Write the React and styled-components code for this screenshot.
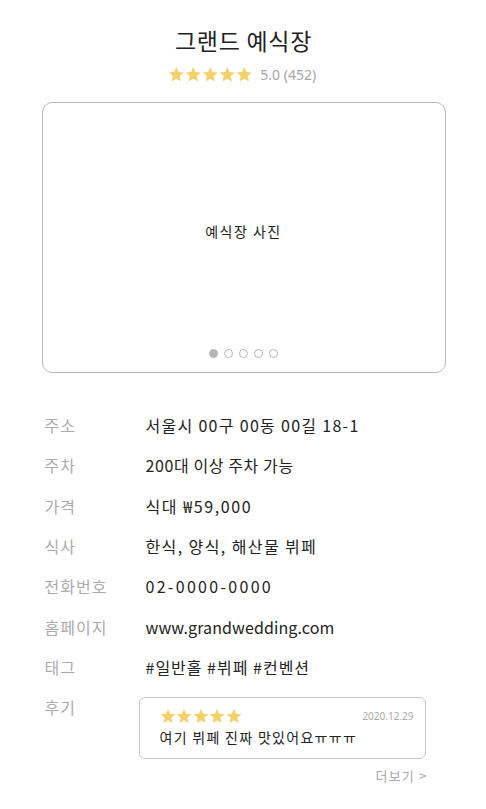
import React from 'react';
import styled, { createGlobalStyle } from 'styled-components';

const GlobalStyle = createGlobalStyle`
  body {
    margin: 0;
    background: #fff;
    font-family: 'Noto Sans CJK KR', 'Noto Sans', sans-serif;
    color: #222;
  }
`;

const Page = styled.div`
  width: 404px;
  margin: 0 auto;
  padding: 25px 0 20px 1px;
  display: flex;
  flex-direction: column;
`;

const Title = styled.h1`
  margin: 0;
  font-size: 23px;
  font-weight: 400;
  line-height: 30px;
  text-align: center;
  letter-spacing: 0.7px;
`;

const RatingRow = styled.div`
  display: flex;
  align-items: center;
  justify-content: center;
  gap: 8px;
  margin-top: 9px;
  margin-right: 3px;
  height: 20px;
`;

const Stars = styled.div`
  display: flex;
  gap: 0.5px;
`;

const Score = styled.span`
  font-size: 14px;
  color: #a6a6a6;
  font-family: 'Noto Sans', sans-serif;
`;

const Photo = styled.div`
  margin-top: 18px;
  height: 269px;
  border: 1px solid #b9b9b9;
  border-radius: 10px;
  display: flex;
  flex-direction: column;
  align-items: center;
`;

const PhotoLabel = styled.div`
  flex: 1;
  display: flex;
  align-items: center;
  padding-top: 10px;
  font-size: 14px;
  letter-spacing: 1.5px;
  color: #222;
`;

const Dots = styled.div`
  display: flex;
  gap: 6px;
  padding-bottom: 14px;
`;

const Dot = styled.span`
  width: 7px;
  height: 7px;
  border-radius: 50%;
  border: 1px solid #b5b5b5;
  background: ${p => (p.active ? '#b5b5b5' : '#fff')};
`;

const Info = styled.div`
  margin-top: 32px;
  display: flex;
  flex-direction: column;
`;

const InfoRow = styled.div`
  display: grid;
  grid-template-columns: 101px 1fr;
  padding-left: 3px;
  min-height: 40.3px;
  align-items: ${p => (p.top ? 'start' : 'center')};
`;

const Label = styled.div`
  font-size: 16px;
  line-height: 40px;
  letter-spacing: 1px;
  color: #ababab;
`;

const Value = styled.div`
  font-size: 16px;
  line-height: 40px;
  letter-spacing: ${p => p.spacing}px;
  color: #222;
`;

const ReviewWrap = styled.div`
  margin-left: -7px;
  margin-top: 10px;
  display: flex;
  flex-direction: column;
  width: 287px;
`;

const ReviewCard = styled.div`
  border: 1px solid #c8c8c8;
  border-radius: 6px;
  padding: 10px 11px 10px 20px;
  display: flex;
  flex-direction: column;
`;

const ReviewHead = styled.div`
  display: flex;
  justify-content: space-between;
  align-items: center;
`;

const ReviewDate = styled.span`
  font-size: 10px;
  color: #aaa;
  font-family: 'Noto Sans', sans-serif;
`;

const ReviewText = styled.div`
  font-size: 14px;
  line-height: 22px;
  margin-top: 2px;
  letter-spacing: 1.3px;
  color: #222;
`;

const More = styled.div`
  align-self: flex-end;
  margin-top: 7px;
  margin-right: -2px;
  font-size: 13px;
  letter-spacing: 1.2px;
  color: #aaa;
`;

const Star = ({ size }) => (
  <svg width={size} height={size} viewBox="0 0 24 24">
    <path
      fill="#f2d16b"
      d="M12 1.5l3.1 7.3 7.9.7-6 5.2 1.8 7.8L12 18.4l-6.8 4.1L7 14.7 1 9.5l7.9-.7z"
    />
  </svg>
);

const StarRow = ({ size }) => (
  <Stars>
    {[0, 1, 2, 3, 4].map(i => (
      <Star key={i} size={size} />
    ))}
  </Stars>
);

const rows = [
  ['주소', '서울시 00구 00동 00길 18-1', 1.3],
  ['주차', '200대 이상 주차 가능', 0.6],
  ['가격', '식대 ₩59,000', 1.6],
  ['식사', '한식, 양식, 해산물 뷔페', 1.4],
  ['전화번호', '02-0000-0000', 2.3],
  ['홈페이지', 'www.grandwedding.com', 0.1],
  ['태그', '#일반홀 #뷔페 #컨벤션', 1],
];

export default function App() {
  return (
    <>
      <GlobalStyle />
      <Page>
        <Title>그랜드 예식장</Title>
        <RatingRow>
          <StarRow size={16.5} />
          <Score>5.0 (452)</Score>
        </RatingRow>
        <Photo>
          <PhotoLabel>예식장 사진</PhotoLabel>
          <Dots>
            {[0, 1, 2, 3, 4].map(i => (
              <Dot key={i} active={i === 0} />
            ))}
          </Dots>
        </Photo>
        <Info>
          {rows.map(([k, v, s]) => (
            <InfoRow key={k}>
              <Label>{k}</Label>
              <Value spacing={s}>{v}</Value>
            </InfoRow>
          ))}
          <InfoRow top>
            <Label>후기</Label>
            <ReviewWrap>
              <ReviewCard>
                <ReviewHead>
                  <StarRow size={16} />
                  <ReviewDate>2020.12.29</ReviewDate>
                </ReviewHead>
                <ReviewText>여기 뷔페 진짜 맛있어요ㅠㅠㅠ</ReviewText>
              </ReviewCard>
              <More>더보기 &gt;</More>
            </ReviewWrap>
          </InfoRow>
        </Info>
      </Page>
    </>
  );
}
